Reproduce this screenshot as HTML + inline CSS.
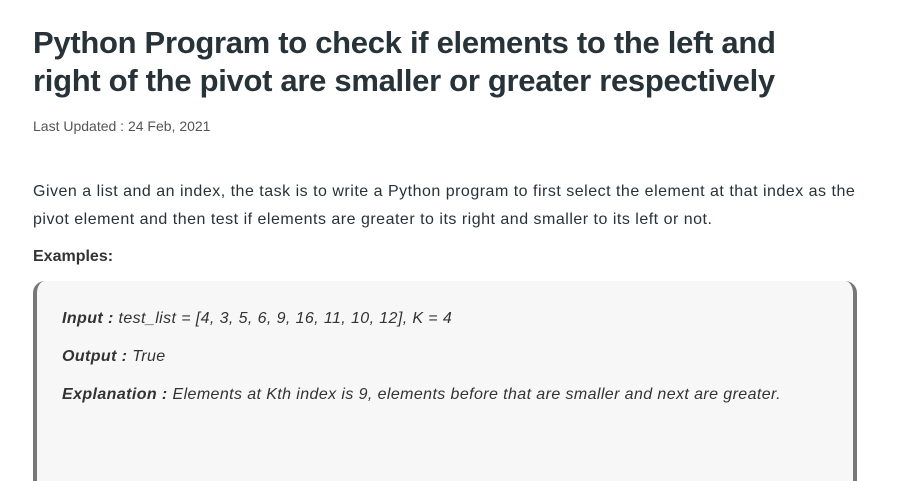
<!DOCTYPE html>
<html><head><meta charset="utf-8"><style>
body{margin:0;background:#fff;width:920px;height:433px;overflow:hidden;font-family:"Liberation Sans",sans-serif;color:#273239}
h1{position:absolute;left:33px;top:24px;margin:0;font-size:31px;line-height:38px;font-weight:600;width:800px;letter-spacing:-0.3px}
.upd{position:absolute;left:33px;top:118px;font-size:14px;color:#555}
.p{position:absolute;left:33px;top:178px;width:845px;font-size:16px;line-height:28px;letter-spacing:0.5px}
.ex{position:absolute;left:33px;top:248px;font-size:16px;font-weight:bold;color:#333}
.box{position:absolute;left:33px;top:281px;width:816px;height:200px;background:#f7f7f7;border-left:4px solid #777;border-right:4px solid #777;border-radius:12px 12px 0 0}
.l{position:absolute;left:25px;font-size:16px;font-style:italic;color:#333;letter-spacing:0.4px}
.l b{font-weight:bold}
</style></head><body>
<h1>Python Program to check if elements to the left and right of the pivot are smaller or greater respectively</h1>
<div class="upd">Last Updated : 24 Feb, 2021</div>
<div class="p">Given a list and an index, the task is to write a Python program to first select the element at that index as the<br>pivot element and then test if elements are greater to its right and smaller to its left or not.</div>
<div class="ex">Examples:</div>
<div class="box">
<div class="l" style="top:29px"><b>Input :</b> test_list = [4, 3, 5, 6, 9, 16, 11, 10, 12], K = 4</div>
<div class="l" style="top:67px"><b>Output :</b> True</div>
<div class="l" style="top:105px"><b>Explanation :</b> Elements at Kth index is 9, elements before that are smaller and next are greater.</div>
</div>
</body></html>
